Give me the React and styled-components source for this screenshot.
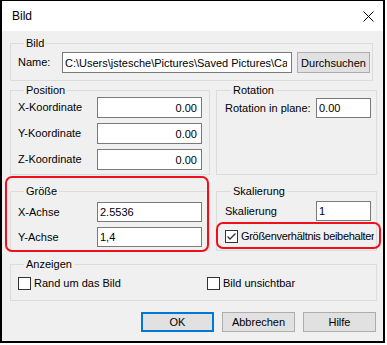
import React from "react";
import styled, { createGlobalStyle } from "styled-components";

const GlobalStyle = createGlobalStyle`
  body {
    margin: 0;
    background: #ffffff;
    font-family: "Liberation Sans", Arial, sans-serif;
  }
`;

const Window = styled.div`
  width: 385px;
  height: 343px;
  box-sizing: border-box;
  border: 2px solid #000;
  border-top-width: 1px;
  background: #f0f0f0;
  display: flex;
  flex-direction: column;
  color: #000;
`;

const TitleBar = styled.div`
  height: 30px;
  flex: none;
  background: #fff;
  display: flex;
  align-items: center;
  justify-content: space-between;
  padding: 0 9px 0 10px;
  font-size: 12px;
`;

const Body = styled.div`
  flex: 1;
  padding: 6px 6px 0 8px;
  display: grid;
  grid-template-columns: 200px 161px;
  column-gap: 6px;
  align-content: start;
  font-size: 11px;
  line-height: 13px;
`;

const Group = styled.fieldset`
  margin: ${(p) => p.$margin || "0"};
  padding: ${(p) => p.$pad};
  border: 1px solid #dcdcdc;
  min-width: 0;
  grid-column: ${(p) => (p.$wide ? "1 / -1" : "auto")};
`;

const Legend = styled.legend`
  padding: 0 2px;
  margin-left: 6px;
  font-size: 11px;
  line-height: 13px;
`;

const Highlight = styled.div`
  position: relative;
  margin: ${(p) => p.$margin || "0"};

  &::after {
    content: "";
    position: absolute;
    inset: ${(p) => p.$inset};
    border: 2px solid #f0101a;
    border-radius: 7px;
    pointer-events: none;
  }
`;

const NameRow = styled.div`
  display: flex;
  align-items: center;
  gap: 5px;
`;

const FieldGrid = styled.div`
  display: grid;
  grid-template-columns: ${(p) => p.$cols};
  row-gap: ${(p) => p.$gap || 5}px;
  align-items: center;
`;

const Label = styled.span`
  white-space: nowrap;
  width: ${(p) => (p.$w ? `${p.$w}px` : "auto")};
`;

const TextBox = styled.input`
  box-sizing: border-box;
  width: ${(p) => p.$w}px;
  height: ${(p) => p.$h || 21}px;
  margin: 0;
  border: 1px solid #7a7a7a;
  background: #fff;
  font: 11px "Liberation Sans", Arial, sans-serif;
  color: #000;
  padding: 0 4px 0 2px;
  text-align: ${(p) => p.$align || "left"};
  outline: none;
`;

const Button = styled.button`
  box-sizing: border-box;
  width: ${(p) => p.$w || 73}px;
  height: ${(p) => p.$h || 20}px;
  margin: 0;
  padding: 0;
  background: #e1e1e1;
  border: ${(p) => (p.$default ? "2px solid #0078d7" : "1px solid #adadad")};
  font: 11px "Liberation Sans", Arial, sans-serif;
  color: #000;
`;

const CheckRow = styled.label`
  display: flex;
  align-items: center;
  gap: 3px;
  white-space: nowrap;
  overflow: hidden;
  letter-spacing: ${(p) => (p.$tight ? "-0.3px" : "normal")};
`;

const Box = styled.span`
  box-sizing: border-box;
  width: 13px;
  height: 13px;
  flex: none;
  border: 1px solid #333;
  background: #fff;
  display: flex;
  align-items: center;
  justify-content: center;
`;

const ChecksGrid = styled.div`
  display: grid;
  grid-template-columns: 189px 1fr;
`;

const ButtonBar = styled.div`
  grid-column: 1 / -1;
  margin: 11px 0 0;
  display: flex;
  justify-content: flex-end;
  gap: 8px;
  padding-right: 1px;
`;

const Check = ({ checked, tight, children }) => (
  <CheckRow $tight={tight}>
    <Box>
      {checked && (
        <svg width="11" height="11" viewBox="0 0 11 11">
          <path d="M1.5 5.5 L4 8 L9.5 2.5" fill="none" stroke="#333" strokeWidth="1.3" />
        </svg>
      )}
    </Box>
    <span>{children}</span>
  </CheckRow>
);

export default function App() {
  return (
    <>
      <GlobalStyle />
      <Window>
        <TitleBar>
          <span>Bild</span>
          <svg width="11" height="11" viewBox="0 0 11 11">
            <path d="M0.5 0.5 L10.5 10.5 M10.5 0.5 L0.5 10.5" stroke="#000" strokeWidth="1" />
          </svg>
        </TitleBar>
        <Body>
          <Group $wide $pad="2px 2px 7px 7px" $margin="0 4px 0 0">
            <Legend>Bild</Legend>
            <NameRow>
              <Label $w={39}>Name:</Label>
              <TextBox $w={230} readOnly value={"C:\\Users\\jstesche\\Pictures\\Saved Pictures\\Ca"} />
              <Button $w={73} $h={21}>Durchsuchen</Button>
            </NameRow>
          </Group>

          <Group $pad="0 6px 4px 7px" $margin="3px 0 0">
            <Legend>Position</Legend>
            <FieldGrid $cols="79px 105px">
              <Label>X-Koordinate</Label>
              <TextBox $w={105} $align="right" readOnly value="0.00" />
              <Label>Y-Koordinate</Label>
              <TextBox $w={105} $align="right" readOnly value="0.00" />
              <Label>Z-Koordinate</Label>
              <TextBox $w={105} $align="right" readOnly value="0.00" />
            </FieldGrid>
          </Group>

          <Group $pad="1px 5px 4px 8px" $margin="3px 0 0">
            <Legend>Rotation</Legend>
            <FieldGrid $cols="91px 55px">
              <Label>Rotation in plane:</Label>
              <TextBox $w={55} $h={20} readOnly value="0.00" />
            </FieldGrid>
          </Group>

          <Highlight $margin="10px 0 0" $inset="-9px 1px -1px -5px">
            <Group $pad="4px 6px 3px 7px">
              <Legend>Größe</Legend>
              <FieldGrid $cols="79px 105px">
                <Label>X-Achse</Label>
                <TextBox $w={105} $h={20} readOnly value="2.5536" />
                <Label>Y-Achse</Label>
                <TextBox $w={105} $h={20} readOnly value="1,4" />
              </FieldGrid>
            </Group>
          </Highlight>

          <Group $pad="3px 5px 6px 8px" $margin="10px 0 0">
            <Legend>Skalierung</Legend>
            <FieldGrid $cols="91px 55px">
              <Label>Skalierung</Label>
              <TextBox $w={55} $h={20} readOnly value="1" />
            </FieldGrid>
            <Highlight $margin="9px -3px 0 0" $inset="-8px -7px -6px -9px">
              <Check checked tight>Größenverhältnis beibehalten</Check>
            </Highlight>
          </Group>

          <Group $wide $pad="6px 6px 10px 7px" $margin="7px 0 0">
            <Legend>Anzeigen</Legend>
            <ChecksGrid>
              <Check>Rand um das Bild</Check>
              <Check>Bild unsichtbar</Check>
            </ChecksGrid>
          </Group>

          <ButtonBar>
            <Button $default>OK</Button>
            <Button>Abbrechen</Button>
            <Button>Hilfe</Button>
          </ButtonBar>
        </Body>
      </Window>
    </>
  );
}
